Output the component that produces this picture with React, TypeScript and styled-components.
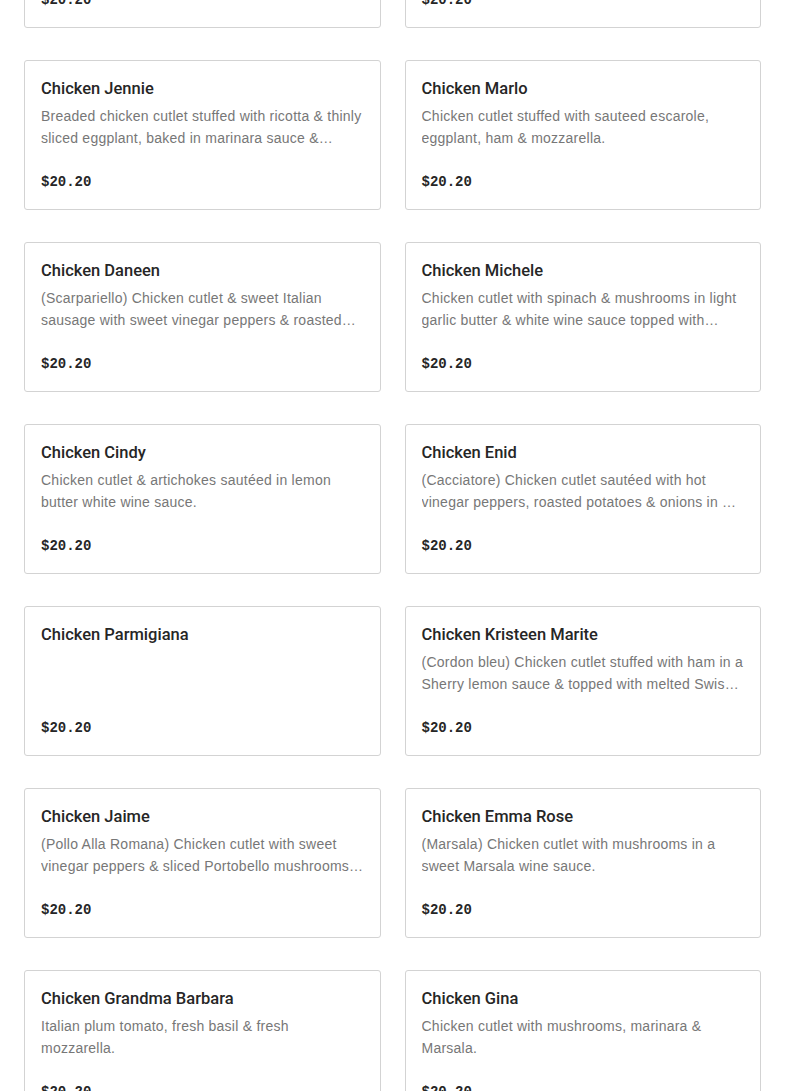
import React from 'react'
import styled, { createGlobalStyle } from 'styled-components'

const GlobalStyle = createGlobalStyle`
  body {
    margin: 0;
    background: #fff;
    font-family: "Liberation Sans", Arial, sans-serif;
  }
`

const Menu = styled.div`
  display: grid;
  grid-template-columns: 1fr 1fr;
  column-gap: 24px;
  row-gap: 32px;
  padding: 0 24px;
  margin-top: -122px;
`

const Card = styled.div`
  border: 1px solid #d3d3d3;
  border-radius: 3px;
  padding: 16px;
  display: flex;
  flex-direction: column;
  background: #fff;
`

const Title = styled.div`
  font-family: Roboto, "Liberation Sans", sans-serif;
  font-size: 16.5px;
  line-height: 24px;
  font-weight: 500;
  color: #262626;
`

const Description = styled.div`
  margin-top: 4px;
  height: 44px;
  font-size: 14px;
  line-height: 22px;
  letter-spacing: 0.24px;
  color: #777;
  display: -webkit-box;
  -webkit-line-clamp: 2;
  -webkit-box-orient: vertical;
  overflow: hidden;
`

const Price = styled.div`
  margin-top: 22px;
  font-family: "Liberation Mono", "DejaVu Sans Mono", monospace;
  font-size: 14px;
  line-height: 22px;
  font-weight: 700;
  color: #262626;
`

const items = [
  { name: 'Chicken Francese', desc: 'Chicken cutlet sautéed in lemon butter white wine sauce.' },
  { name: 'Chicken Piccata', desc: 'Chicken cutlet sautéed with capers in lemon butter white wine sauce.' },
  { name: 'Chicken Jennie', desc: 'Breaded chicken cutlet stuffed with ricotta & thinly sliced eggplant, baked in marinara sauce & topped with mozzarella.' },
  { name: 'Chicken Marlo', desc: 'Chicken cutlet stuffed with sauteed escarole, eggplant, ham & mozzarella.' },
  { name: 'Chicken Daneen', desc: '(Scarpariello) Chicken cutlet & sweet Italian sausage with sweet vinegar peppers & roasted potatoes in a garlic white wine sauce.' },
  { name: 'Chicken Michele', desc: 'Chicken cutlet with spinach & mushrooms in light garlic butter & white wine sauce topped with mozzarella.' },
  { name: 'Chicken Cindy', desc: 'Chicken cutlet & artichokes sautéed in lemon butter white wine sauce.' },
  { name: 'Chicken Enid', desc: '(Cacciatore) Chicken cutlet sautéed with hot vinegar peppers, roasted potatoes & onions in a light marinara sauce.' },
  { name: 'Chicken Parmigiana', desc: '' },
  { name: 'Chicken Kristeen Marite', desc: '(Cordon bleu) Chicken cutlet stuffed with ham in a Sherry lemon sauce & topped with melted Swiss cheese.' },
  { name: 'Chicken Jaime', desc: '(Pollo Alla Romana) Chicken cutlet with sweet vinegar peppers & sliced Portobello mushrooms in a white wine sauce.' },
  { name: 'Chicken Emma Rose', desc: '(Marsala) Chicken cutlet with mushrooms in a sweet Marsala wine sauce.' },
  { name: 'Chicken Grandma Barbara', desc: 'Italian plum tomato, fresh basil & fresh mozzarella.' },
  { name: 'Chicken Gina', desc: 'Chicken cutlet with mushrooms, marinara & Marsala.' },
]

export default function App() {
  return (
    <>
      <GlobalStyle />
      <Menu>
        {items.map((item) => (
          <Card key={item.name}>
            <Title>{item.name}</Title>
            <Description>{item.desc}</Description>
            <Price>$20.20</Price>
          </Card>
        ))}
      </Menu>
    </>
  )
}
